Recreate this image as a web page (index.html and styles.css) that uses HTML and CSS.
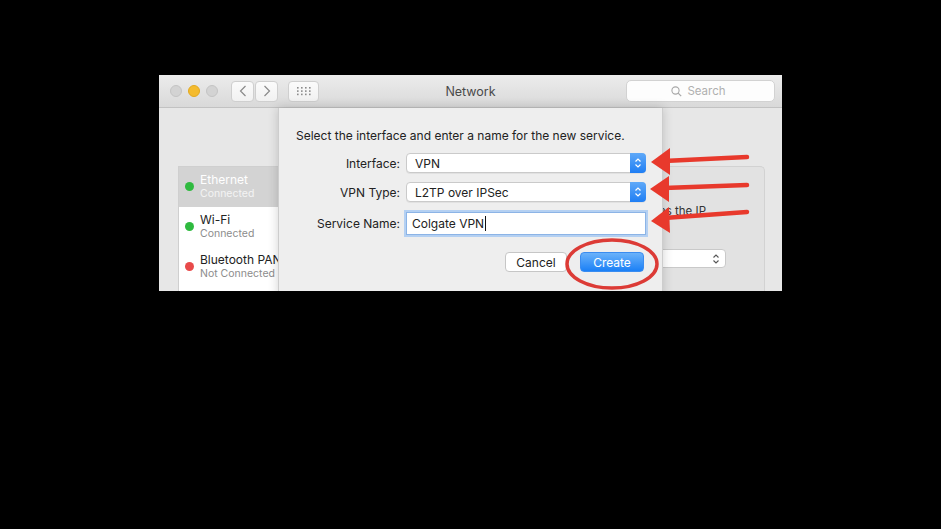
FILE: index.html
```html
<html lang="en">

<head>
  <meta charset="UTF-8">
  <meta name="viewport" content="width=device-width, initial-scale=1.0">
  <title>Network</title>
  <link rel="stylesheet" href="styles.css">
</head>

<body>
  <div class="stage">
    <div class="window">
      <div class="titlebar">
        <div class="tools">
          <div class="lights">
            <span class="light off"></span>
            <span class="light min"></span>
            <span class="light off"></span>
          </div>
          <div class="nav">
            <button class="nav-btn"><svg width="8" height="12" viewBox="0 0 8 12"><path d="M6.5 1 L1.5 6 L6.5 11" fill="none" stroke="#8a8a8a" stroke-width="1.2"/></svg></button>
            <button class="nav-btn"><svg width="8" height="12" viewBox="0 0 8 12"><path d="M1.5 1 L6.5 6 L1.5 11" fill="none" stroke="#8a8a8a" stroke-width="1.2"/></svg></button>
          </div>
          <button class="grid-btn">
            <svg width="16" height="10" viewBox="0 0 16 10" fill="#8c8c8c">
              <rect x="1" y="1" width="1.6" height="1.6"/><rect x="5" y="1" width="1.6" height="1.6"/><rect x="9" y="1" width="1.6" height="1.6"/><rect x="13" y="1" width="1.6" height="1.6"/>
              <rect x="1" y="4.3" width="1.6" height="1.6"/><rect x="5" y="4.3" width="1.6" height="1.6"/><rect x="9" y="4.3" width="1.6" height="1.6"/><rect x="13" y="4.3" width="1.6" height="1.6"/>
              <rect x="1" y="7.6" width="1.6" height="1.6"/><rect x="5" y="7.6" width="1.6" height="1.6"/><rect x="9" y="7.6" width="1.6" height="1.6"/><rect x="13" y="7.6" width="1.6" height="1.6"/>
            </svg>
          </button>
        </div>
        <div class="title">Network</div>
        <div class="search-wrap">
          <div class="search">
            <svg width="11" height="11" viewBox="0 0 11 11"><circle cx="4.5" cy="4.5" r="3.6" fill="none" stroke="#a8a8a8" stroke-width="1.1"/><path d="M7.2 7.2 L10.2 10.2" stroke="#a8a8a8" stroke-width="1.2"/></svg>
            <span>Search</span>
          </div>
        </div>
      </div>

      <div class="content">
        <div class="sidebar">
          <div class="service selected">
            <span class="dot green"></span>
            <div class="service-text">
              <div class="service-name">Ethernet</div>
              <div class="service-status">Connected</div>
            </div>
          </div>
          <div class="service">
            <span class="dot green"></span>
            <div class="service-text">
              <div class="service-name">Wi-Fi</div>
              <div class="service-status">Connected</div>
            </div>
          </div>
          <div class="service">
            <span class="dot red"></span>
            <div class="service-text">
              <div class="service-name">Bluetooth PAN</div>
              <div class="service-status">Not Connected</div>
            </div>
          </div>
        </div>

        <div class="detail">
          <div class="detail-box">
            <div class="detail-line">as the IP</div>
            <div class="detail-popup">
              <svg width="8" height="12" viewBox="0 0 8 12"><path d="M1.5 4.5 L4 2 L6.5 4.5 M1.5 7.5 L4 10 L6.5 7.5" fill="none" stroke="#555" stroke-width="1.1"/></svg>
            </div>
          </div>
        </div>

        <div class="sheet">
          <p class="sheet-intro">Select the interface and enter a name for the new service.</p>
          <div class="sheet-form">
            <label>Interface:</label>
            <div class="popup">
              <span>VPN</span>
              <span class="stepper"><svg width="8" height="12" viewBox="0 0 8 12"><path d="M1.5 4.5 L4 2 L6.5 4.5 M1.5 7.5 L4 10 L6.5 7.5" fill="none" stroke="#fff" stroke-width="1.2"/></svg></span>
            </div>
            <label>VPN Type:</label>
            <div class="popup">
              <span>L2TP over IPSec</span>
              <span class="stepper"><svg width="8" height="12" viewBox="0 0 8 12"><path d="M1.5 4.5 L4 2 L6.5 4.5 M1.5 7.5 L4 10 L6.5 7.5" fill="none" stroke="#fff" stroke-width="1.2"/></svg></span>
            </div>
            <label class="label-field">Service Name:</label>
            <div class="field"><span>Colgate VPN</span><span class="caret"></span></div>
          </div>
          <div class="sheet-buttons">
            <button class="btn">Cancel</button>
            <button class="btn primary">Create</button>
          </div>
        </div>
      </div>
    </div>

    <svg class="marks" width="941" height="529" viewBox="0 0 941 529">
      <g stroke="#e8392c" stroke-width="4.5" stroke-linecap="round" fill="none">
        <path d="M747 157 L664 161"/>
        <path d="M747 185 L664 188"/>
        <path d="M747 212 L664 218"/>
      </g>
      <g fill="#e8392c">
        <polygon points="651,162 670,148 670,175"/>
        <polygon points="650,189 669,176 669,202"/>
        <polygon points="651,221 669,207 670,233"/>
      </g>
      <ellipse cx="612" cy="264" rx="45" ry="24" fill="none" stroke="#dc3b36" stroke-width="3.5"/>
    </svg>
  </div>
</body>

</html>
```

FILE: styles.css
```css
html,
body {
  margin: 0;
  background: #000;
}

body {
  font-family: "Inter", "Liberation Sans", sans-serif;
  color: #222;
}

.stage {
  position: relative;
  width: 941px;
  height: 529px;
  padding: 75px 0 0 159px;
  box-sizing: border-box;
}

.window {
  width: 623px;
  height: 216px;
  overflow: hidden;
  display: flex;
  flex-direction: column;
  background: #e8e8e8;
}

/* title bar */

.titlebar {
  height: 33px;
  flex: none;
  display: grid;
  grid-template-columns: 1fr auto 1fr;
  align-items: center;
  background: linear-gradient(#ececec, #d9d9d9);
  border-bottom: 1px solid #c2c2c2;
  box-sizing: border-box;
}

.tools {
  display: flex;
  align-items: center;
  padding-left: 11px;
}

.lights {
  display: flex;
  gap: 6px;
}

.light {
  width: 12px;
  height: 12px;
  border-radius: 50%;
  box-sizing: border-box;
}

.light.off {
  background: #d3d3d3;
  border: 1px solid #c4c4c4;
}

.light.min {
  background: #f4bb2e;
  border: 1px solid #e2a920;
}

.nav {
  display: flex;
  gap: 1px;
  margin-left: 13px;
}

.nav-btn,
.grid-btn {
  height: 21px;
  display: flex;
  align-items: center;
  justify-content: center;
  padding: 0;
  background: linear-gradient(#fbfbfb, #f1f1f1);
  border: 1px solid #cfcfcf;
  border-radius: 4px;
}

.nav-btn {
  width: 23px;
}

.grid-btn {
  width: 31px;
  margin-left: 10px;
}

.title {
  font-size: 12.5px;
  color: #4a4a4a;
  padding-top: 1px;
}

.search-wrap {
  display: flex;
  justify-content: flex-end;
  padding-right: 7px;
}

.search {
  width: 149px;
  height: 22px;
  box-sizing: border-box;
  display: flex;
  align-items: center;
  justify-content: center;
  gap: 5px;
  padding-right: 4px;
  background: #fdfdfd;
  border: 1px solid #d2d2d2;
  border-radius: 5px;
  font-size: 11.5px;
  color: #b0b0b0;
}

/* content */

.content {
  position: relative;
  flex: 1;
  display: flex;
  padding: 58px 17px 0 19px;
  background: #e7e7e7;
}

.sidebar {
  width: 150px;
  flex: none;
  background: #fff;
  border: 1px solid #cfcfcf;
  border-bottom: 0;
  box-sizing: border-box;
}

.service {
  height: 40px;
  display: flex;
  align-items: center;
  gap: 6px;
  padding-left: 6px;
  padding-bottom: 1px;
  box-sizing: border-box;
  white-space: nowrap;
}

.service.selected {
  background: #d3d3d3;
  color: #fff;
}

.dot {
  width: 9px;
  height: 9px;
  border-radius: 50%;
  flex: none;
}

.dot.green {
  background: #2fba3f;
}

.dot.red {
  background: #e84a4a;
}

.service-name {
  font-size: 12px;
  line-height: 14px;
}

.service-status {
  font-size: 10.5px;
  line-height: 13px;
  color: #8c8c8c;
}

.selected .service-status {
  color: #f4f4f4;
}

.detail {
  flex: 1;
  display: flex;
  padding-left: 20px;
}

.detail-box {
  flex: 1;
  display: flex;
  flex-direction: column;
  align-items: flex-end;
  background: #e2e2e2;
  border: 1px solid #d2d2d2;
  border-bottom: 0;
  border-radius: 5px 5px 0 0;
  padding: 37px 38px 0 0;
  font-size: 11.5px;
  color: #333;
}

.detail-line {
  white-space: nowrap;
  padding-right: 20px;
}

.detail-popup {
  margin-top: 31px;
  width: 200px;
  height: 19px;
  box-sizing: border-box;
  display: flex;
  align-items: center;
  justify-content: flex-end;
  padding-right: 5px;
  background: #fff;
  border: 1px solid #c9c9c9;
  border-radius: 4px;
}

/* sheet dialog over the content */

.sheet {
  position: absolute;
  top: 0;
  left: 119px;
  width: 385px;
  height: 190px;
  box-sizing: border-box;
  padding: 20px 18px 0 17px;
  background: #eeeeee;
  border-left: 1px solid #cdcdcd;
  border-right: 1px solid #cdcdcd;
  box-shadow: 0 0 10px rgba(0, 0, 0, 0.18);
}

.sheet-intro {
  margin: 0;
  font-size: 12px;
  color: #222;
}

.sheet-form {
  display: grid;
  grid-template-columns: 104px 240px;
  column-gap: 6px;
  row-gap: 9px;
  align-items: center;
  margin-top: 10px;
  font-size: 12px;
}

.sheet-form label {
  text-align: right;
  color: #222;
}

.popup {
  height: 20px;
  box-sizing: border-box;
  display: flex;
  align-items: center;
  justify-content: space-between;
  padding-left: 8px;
  background: #fff;
  border: 1px solid #cacaca;
  border-radius: 4px;
  box-shadow: 0 1px 0 rgba(0, 0, 0, 0.05);
}

.stepper {
  width: 16px;
  height: 20px;
  margin: -1px -1px -1px 0;
  display: flex;
  align-items: center;
  justify-content: center;
  background: linear-gradient(#5fa9f8, #1f7ef4);
  border-radius: 0 4px 4px 0;
}

.field {
  height: 23px;
  margin-top: 1px;
  box-sizing: border-box;
  display: flex;
  align-items: center;
  padding-left: 5px;
  background: #fff;
  border: 1px solid #8cb4e6;
  box-shadow: 0 0 0 2px #b4d0f2;
}

.caret {
  width: 1px;
  height: 15px;
  background: #111;
  margin-left: 1px;
}

.sheet-buttons {
  display: flex;
  justify-content: flex-end;
  gap: 13px;
  margin-top: 17px;
}

.btn {
  height: 20px;
  padding: 0;
  font-family: inherit;
  font-size: 12px;
  border-radius: 4px;
  background: #fff;
  border: 1px solid #c6c6c6;
  color: #222;
}

.btn:first-child {
  width: 62px;
}

.btn.primary {
  width: 64px;
  background: linear-gradient(#6ab2fa, #1b80f6);
  border-color: #3a8cf0;
  color: #fff;
}

/* red annotations */

.marks {
  position: absolute;
  top: 0;
  left: 0;
}
```
